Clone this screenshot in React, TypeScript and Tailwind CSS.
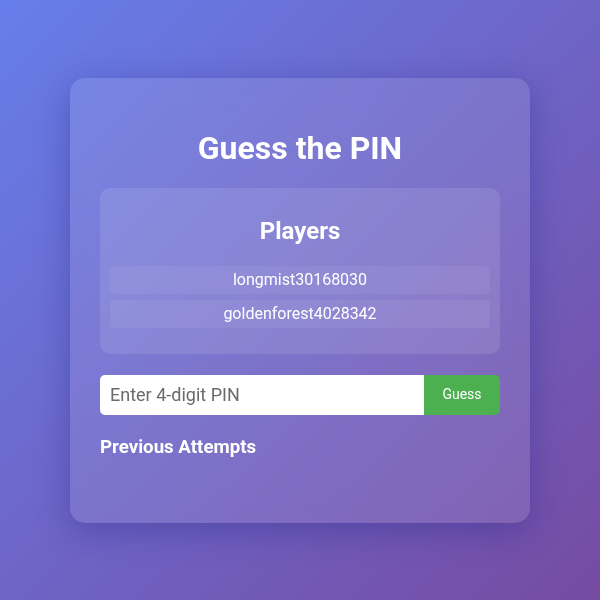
import React, { useState } from 'react'

const players = ['longmist30168030', 'goldenforest4028342']

export default function App() {
  const [pin, setPin] = useState('')

  return (
    <div
      className="w-[600px] h-[600px] flex items-center justify-center bg-[linear-gradient(135deg,#667eea_0%,#764ba2_100%)]"
      style={{ fontFamily: 'Roboto, "Noto Sans", sans-serif' }}
    >
      <div className="w-[460px] h-[445px] rounded-[15px] bg-white/10 backdrop-blur-md shadow-[0_8px_32px_rgba(31,38,135,0.37)] px-[30px] pt-[30px] text-white">
        <h1 className="text-[32px] font-bold text-center leading-[37px] mt-[22px] mb-[21px]">Guess the PIN</h1>

        {/* Players */}
        <div className="rounded-[10px] bg-white/10 px-[10px] pt-[10px] pb-[26px]">
          <h2 className="text-[24px] font-bold text-center leading-[28px] mt-[19px] mb-[21px]">Players</h2>
          <div className="flex flex-col gap-[6px]">
            {players.map((p) => (
              <div key={p} className="bg-white/[0.06] rounded-[3px] h-[28px] pt-[1px] flex items-center justify-center text-[16px]">
                {p}
              </div>
            ))}
          </div>
        </div>

        {/* Guess input */}
        <div className="flex mt-[21px] h-[40px]">
          <input
            value={pin}
            onChange={(e) => setPin(e.target.value)}
            placeholder="Enter 4-digit PIN"
            className="flex-1 min-w-0 bg-white rounded-l-[5px] px-[10px] text-[18px] text-gray-800 placeholder:text-[#6b6b6b] outline-none"
          />
          <button className="w-[76px] bg-[#4CAF50] rounded-r-[5px] text-[14px] text-white">Guess</button>
        </div>

        <h3 className="text-[18.7px] font-bold leading-[22px] mt-[21px]">Previous Attempts</h3>
      </div>
    </div>
  )
}
